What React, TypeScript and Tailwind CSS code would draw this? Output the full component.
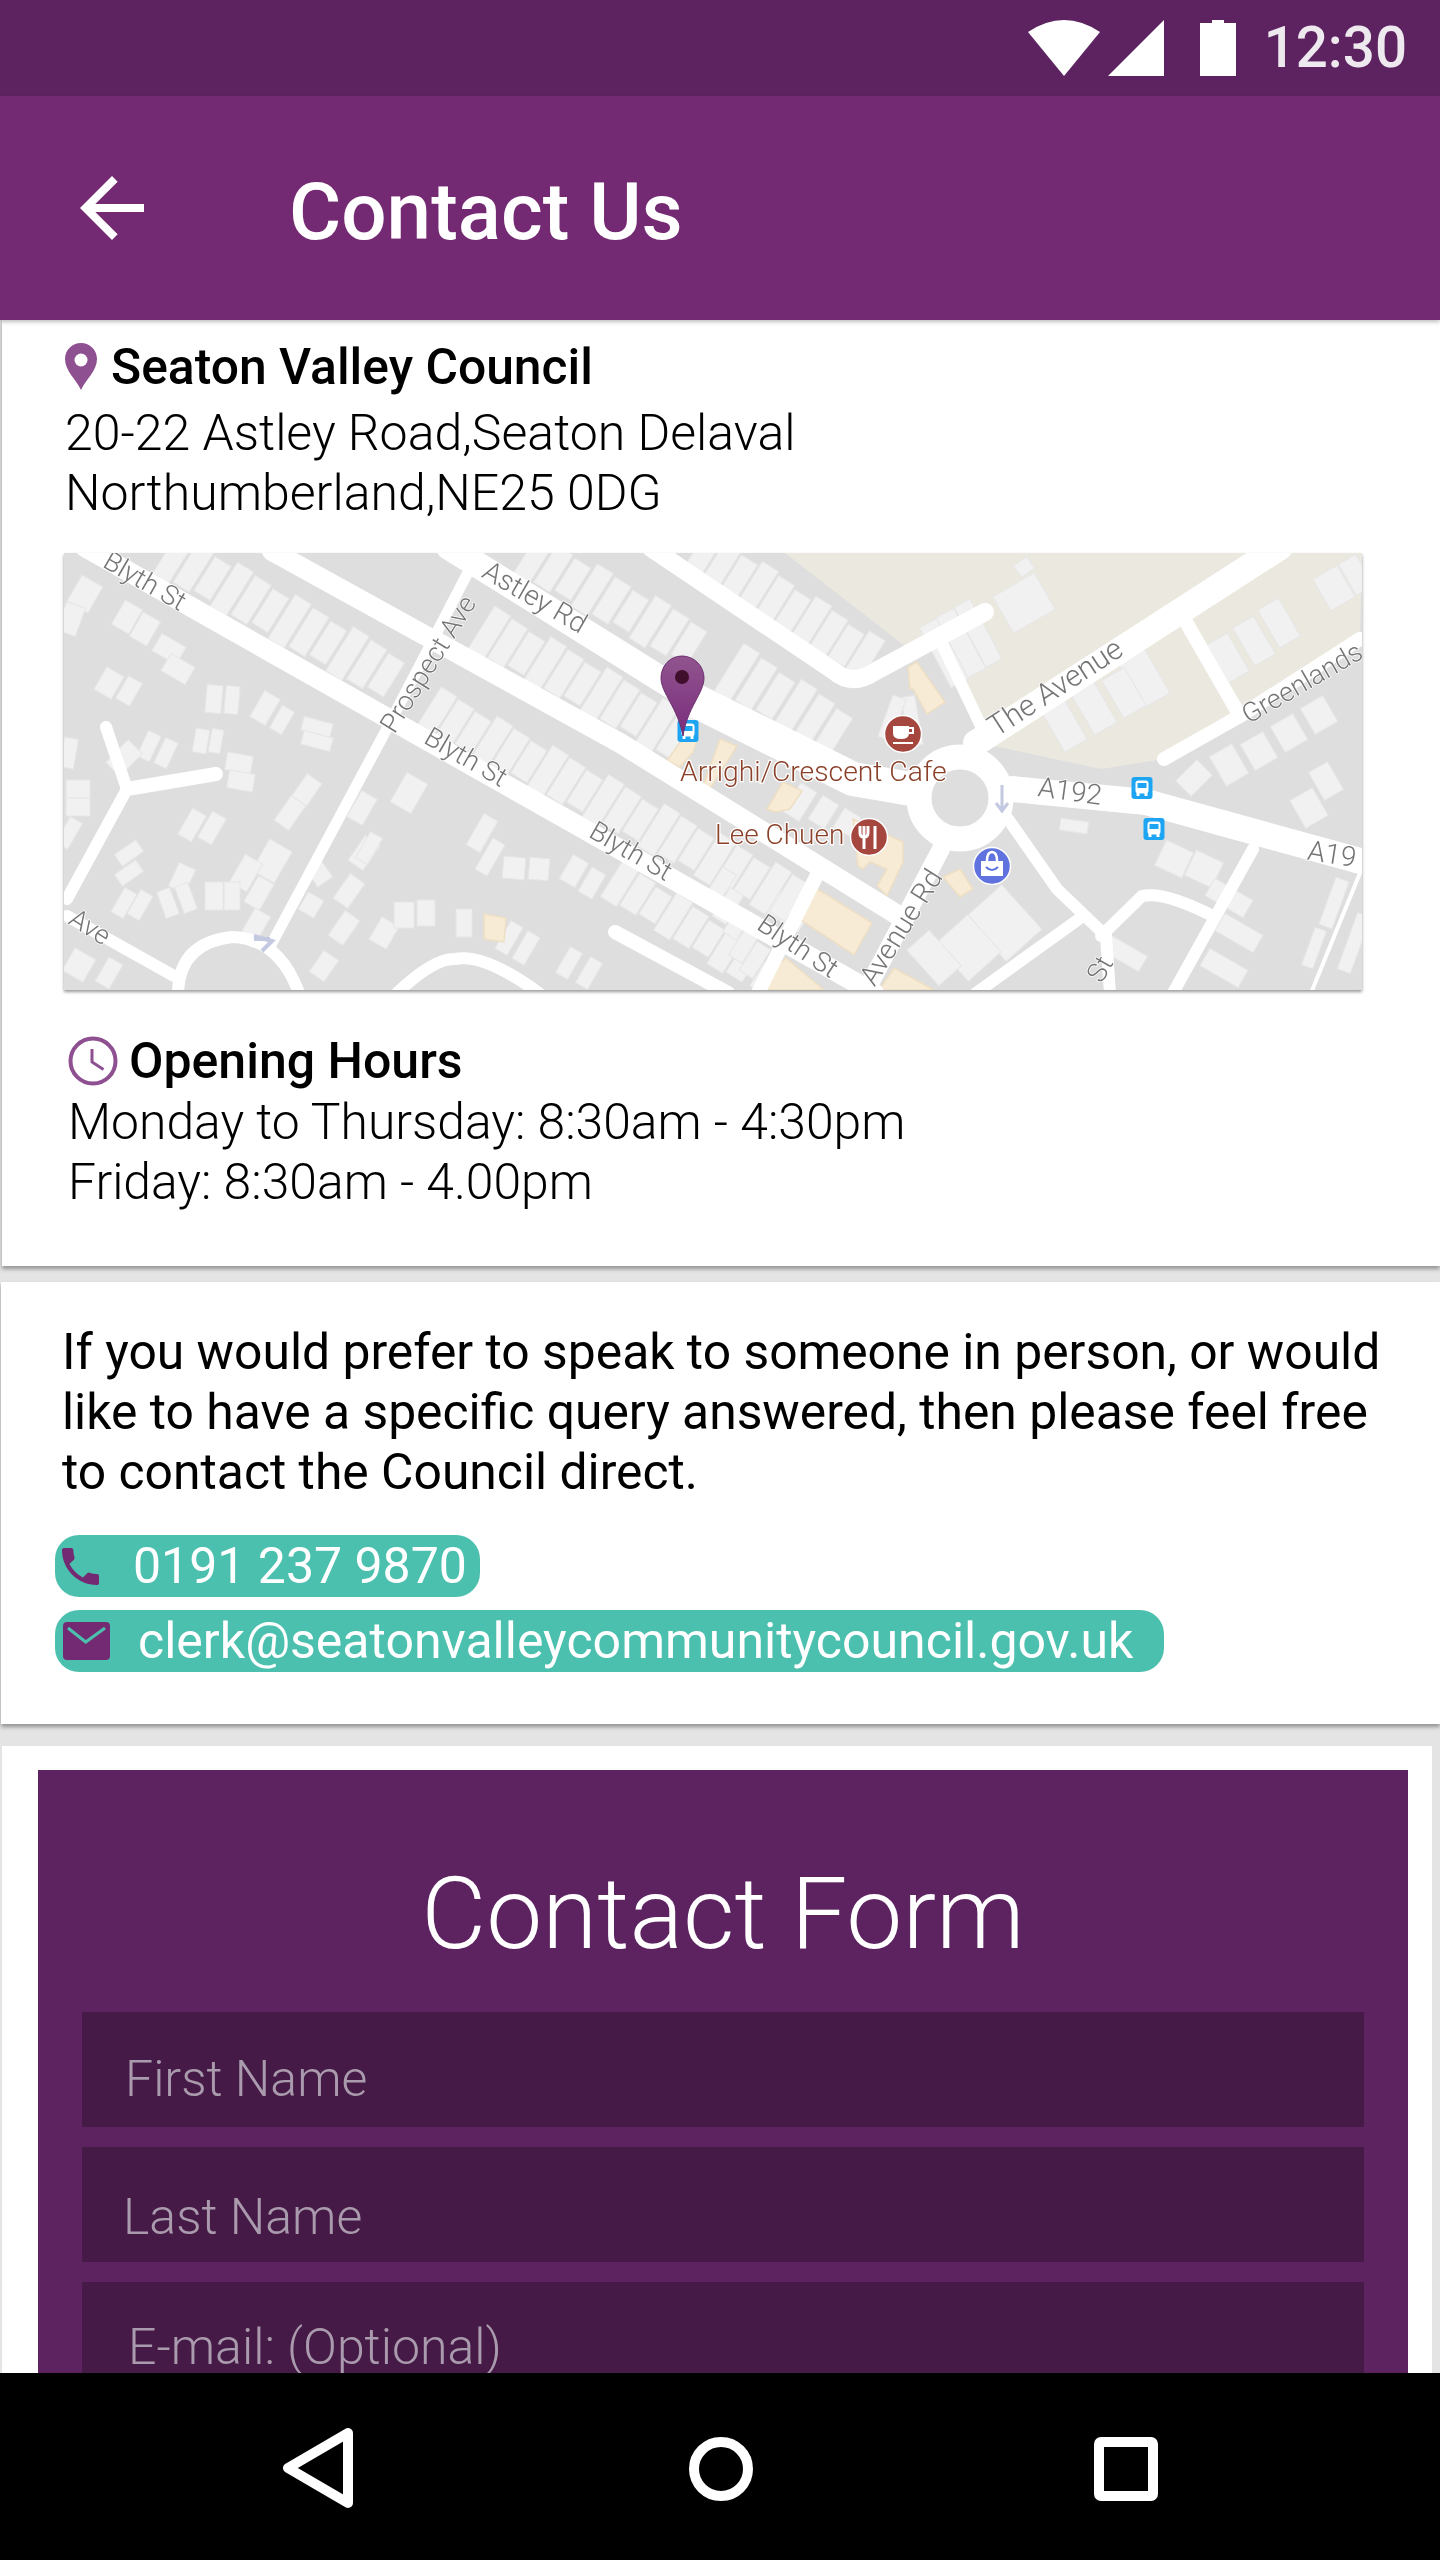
// [x, y, w, h, angle] in map pixels
const houses: number[][] = [
  [21, 41, 24, 30, 30], [7, 66, 20, 30, 20], [63, 64, 20, 28, 30], [81, 76, 20, 28, 30],
  [105, 96, 28, 20, 30], [114, 116, 28, 20, 30], [45, 130, 20, 26, 30], [65, 138, 16, 26, 30],
  [150, 146, 16, 28, 5], [168, 147, 14, 28, 5], [201, 155, 18, 30, 30], [218, 167, 14, 26, 30],
  [253, 174, 30, 14, 15], [253, 188, 30, 14, 15], [137, 188, 14, 24, 10], [152, 188, 12, 24, 10],
  [85, 193, 14, 28, 25], [102, 200, 14, 28, 25], [175, 210, 26, 18, 10], [177, 228, 26, 18, 10],
  [242, 238, 18, 30, 35], [226, 260, 18, 30, 35], [208, 308, 26, 36, 30], [195, 340, 18, 30, 30],
  [190, 375, 18, 36, 30], [60, 205, 32, 20, -45], [128, 272, 16, 30, 30], [148, 275, 16, 30, 30],
  [118, 325, 18, 26, 25], [182, 320, 20, 32, 30], [65, 300, 14, 26, 55], [65, 320, 14, 26, 55],
  [60, 350, 14, 28, 30], [76, 352, 14, 28, 30], [104, 350, 14, 28, -20], [122, 345, 14, 28, -20],
  [150, 343, 18, 28, 0], [168, 343, 16, 28, 0], [14, 236, 24, 18, 0], [14, 254, 24, 18, 0],
  [5, 200, 14, 30, 10], [5, 280, 14, 30, 30], [255, 320, 18, 22, -35], [247, 352, 18, 20, 30],
  [300, 300, 18, 30, 35], [285, 338, 18, 30, 35], [280, 375, 18, 30, 35], [260, 413, 18, 26, 35],
  [298, 255, 18, 30, 30], [305, 295, 14, 30, 30], [345, 240, 24, 34, 30], [418, 280, 16, 36, 30],
  [426, 304, 14, 36, 30], [450, 315, 22, 22, 5], [475, 316, 20, 22, 5], [510, 318, 18, 28, 30],
  [528, 330, 16, 28, 30], [320, 380, 20, 26, 30], [340, 362, 20, 26, 0], [362, 360, 18, 26, 0],
  [400, 370, 16, 28, 0], [445, 385, 14, 32, 30], [462, 395, 14, 32, 30], [505, 410, 14, 30, 30],
  [525, 420, 14, 30, 30], [15, 412, 24, 26, 30], [45, 420, 16, 28, 30],
  // right of the roundabout
  [880, 100, 20, 68, -28], [897, 90, 20, 68, -28], [914, 80, 18, 68, -28], [960, 50, 48, 42, -30],
  [960, 14, 16, 14, -35], [1000, 172, 26, 48, -30], [1030, 155, 26, 48, -30], [1080, 125, 30, 52, -30],
  [1060, 140, 26, 44, -30], [1164, 105, 24, 44, -30], [1190, 88, 24, 44, -30], [1215, 70, 24, 44, -30],
  [1270, 35, 28, 36, -30], [1292, 22, 20, 36, -30], [1130, 225, 30, 22, -45], [1165, 212, 26, 34, -30],
  [1195, 198, 26, 30, -30], [1225, 180, 26, 30, -30], [1255, 162, 26, 30, -30], [1245, 255, 26, 32, -30],
  [1262, 228, 22, 32, -30], [1010, 273, 28, 12, 8], [1110, 306, 30, 28, 25], [1140, 316, 30, 28, 25],
  [940, 370, 48, 60, -42], [904, 395, 44, 50, -42], [870, 405, 30, 48, -42], [720, 355, 50, 26, 33],
  [1060, 400, 44, 18, 30], [1165, 345, 44, 20, 30], [1175, 380, 44, 20, 30], [1160, 415, 44, 20, 30],
  [1290, 390, 14, 60, 20], [1270, 350, 14, 50, 20], [1250, 395, 12, 40, 20], [848, 168, 14, 50, -10],
  [828, 165, 14, 44, 20],
];

// [x0, y0, x1, y1, width, depth, angle] rows of terraced houses
const rows: number[][] = [
  [110, 4, 322, 122, 19, 52, 32], [372, 160, 725, 345, 19, 50, 32], [425, 80, 612, 182, 19, 52, 32],
  [673, 119, 769, 179, 19, 56, 32], [470, 5, 625, 90, 19, 50, 32], [640, 0, 800, 104, 19, 50, 32],
  [556, 330, 680, 408, 19, 44, 32], [655, 335, 700, 425, 16, 40, 32], [736, 249, 783, 269, 19, 34, 32],
];

const roads: [string, number][] = [
  ["M21 -6 L810 440", 20],
  ["M208 -2 L556 190 L840 366", 20],
  ["M385 -6 L640 153", 26],
  ["M630 147 L789 226 L870 240", 34],
  ["M587 -5 L770 118 Q788 134 812 118 L921 59", 18],
  ["M912 190 L1216 -6", 26],
  ["M948 236 L1082 249 L1296 308", 26],
  ["M877 89 L917 173", 12],
  ["M1122 69 L1176 163", 14],
  ["M1100 206 L1176 163 L1296 86", 14],
  ["M944 266 L993 336 L1042 383 L1046 440", 12],
  ["M912 440 L1015 366", 12],
  ["M877 296 L801 440", 18],
  ["M1189 296 L1109 440", 12],
  ["M1037 383 L1078 343 Q1100 338 1149 363", 12],
  ["M1296 320 L1247 440", 4],
  ["M756 316 L694 440", 14],
  ["M63 236 L42 174", 12],
  ["M63 236 L152 221", 14],
  ["M63 236 L3 346", 12],
  ["M412 4 L319 183 L208 390", 11],
  ["M3 363 L110 423", 12],
  ["M114 440 Q115 390 168 384 Q215 385 235 440", 12],
  ["M333 440 Q370 405 391 406 Q420 400 475 440", 12],
  ["M551 379 L664 440", 14],
];

const labels: [string, number, number, number, number][] = [
  ["Blyth St", 81, 28, 30, 27],
  ["Astley Rd", 471, 44, 30, 28],
  ["Prospect Ave", 364, 111, -58, 27],
  ["Blyth St", 402, 204, 30, 27],
  ["Blyth St", 567, 298, 30, 27],
  ["Ave", 26, 374, 32, 27],
  ["Blyth St", 734, 393, 34, 27],
  ["Avenue Rd", 837, 374, -58, 28],
  ["St", 1036, 416, -60, 27],
  ["The Avenue", 991, 134, -33, 30],
  ["Greenlands", 1238, 130, -30, 27],
  ["A192", 1006, 238, 8, 28],
  ["A19", 1268, 301, 9, 28],
];

const beige: string[] = [
  "844,114 853,109 881,149 863,161 849,136 846,136",
  "603,208 616,189 636,179 629,199 616,214",
  "656,186 673,193 644,239 640,230",
  "703,256 719,229 738,238 726,256 711,259",
  "789,266 839,289 839,309 823,343 813,333 823,316 806,309 799,316 794,313",
  "879,324 896,316 909,336 896,344",
  "420,361 442,365 440,389 420,386",
  "735,366 752,335 808,370 790,402",
  "700,424 722,405 760,437 700,437",
  "815,437 830,415 870,437",
];

function BusStop({ x, y }: { x: number; y: number }) {
  return (
    <g transform={`translate(${x - 10.5} ${y - 11})`}>
      <rect width="21" height="22" rx="3" fill="#1da5f4" />
      <rect x="4" y="3.5" width="13" height="13" rx="3" fill="#fff" />
      <rect x="6" y="6" width="9" height="5" fill="#1da5f4" />
      <rect x="5" y="16" width="3" height="3" fill="#fff" />
      <rect x="13" y="16" width="3" height="3" fill="#fff" />
    </g>
  );
}

function MapPicture() {
  const stripes: number[][] = [];
  rows.forEach(([x0, y0, x1, y1, w, d, a]) => {
    const n = Math.round(Math.hypot(x1 - x0, y1 - y0) / (w + 2.5));
    for (let i = 0; i <= n; i++) {
      const x = x0 + ((x1 - x0) * i) / n;
      const y = y0 + ((y1 - y0) * i) / n;
      stripes.push([x, y, w, d - (i % 3) * 6, a]);
    }
  });
  return (
    <svg viewBox="0 0 1298 437" className="block w-full h-full blur-[0.5px]">
      <defs>
        <linearGradient id="pin" x1="0" y1="0" x2="0" y2="1">
          <stop offset="0" stopColor="#91558f" />
          <stop offset="1" stopColor="#7a2c7c" />
        </linearGradient>
      </defs>
      <rect width="1298" height="437" fill="#dedede" />
      <polygon points="721,0 841,93 880,85 921,173 930,193 1037,216 1100,206 1296,83 1298,0" fill="#ebe9df" />
      {[...houses, ...stripes].map(([x, y, w, h, a], i) => (
        <rect
          key={i}
          x={x - w / 2}
          y={y - h / 2}
          width={w}
          height={h}
          transform={`rotate(${a} ${x} ${y})`}
          fill="#f1f1f1"
          stroke="#e6e6e6"
        />
      ))}
      {beige.map((p, i) => (
        <polygon key={i} points={p} fill="#f7ebd6" stroke="#eedfc4" strokeWidth="1.5" />
      ))}
      {roads.map(([d, w], i) => (
        <path key={i} d={d} fill="none" stroke="#fff" strokeWidth={w} strokeLinecap="round" strokeLinejoin="round" />
      ))}
      <circle cx="896" cy="245" r="41" fill="#dedede" stroke="#fff" strokeWidth="25" />
      <path d="M938 232 V258 M932 250 L938 258 L944 250" fill="none" stroke="#c3c9e0" strokeWidth="3" />
      <path d="M190 383 L208 388 L198 398 M190 386 H206" fill="none" stroke="#c3c9e0" strokeWidth="4" />
      {labels.map(([t, x, y, a, size], i) => (
        <text
          key={i}
          x={x}
          y={y}
          transform={`rotate(${a} ${x} ${y})`}
          textAnchor="middle"
          dominantBaseline="central"
          fontSize={size}
          fill="#757575"
          stroke="#fff"
          strokeWidth="1.5"
          paintOrder="stroke"
          className="font-[Roboto,sans-serif]"
        >
          {t}
        </text>
      ))}
      <text x="616" y="228" fontSize="28.3" fill="#8a4029" stroke="#fff" strokeWidth="2.5" paintOrder="stroke" className="font-[Roboto,sans-serif]">
        Arrighi/Crescent Cafe
      </text>
      <text x="651" y="291" fontSize="28" fill="#8a4029" stroke="#fff" strokeWidth="2.5" paintOrder="stroke" className="font-[Roboto,sans-serif]">
        Lee Chuen
      </text>
      <BusStop x={624} y={178} />
      <BusStop x={1078} y={235} />
      <BusStop x={1090} y={276} />
      <circle cx="839" cy="181" r="18.5" fill="#a5473f" stroke="#fff" strokeWidth="1.5" />
      <path d="M829 173 H845 V180 Q845 186 837 186 Q829 186 829 180 Z" fill="#fff" />
      <path d="M845 175 H849 V180 H845 M829 190 H849" fill="none" stroke="#fff" strokeWidth="2" />
      <circle cx="805" cy="284" r="18.5" fill="#a5473f" stroke="#fff" strokeWidth="1.5" />
      <path d="M800 273 V296 M796 273 V280 Q796 284 800 284 Q804 284 804 280 V273 M811 273 V296" fill="none" stroke="#fff" strokeWidth="3" />
      <circle cx="928" cy="313" r="18.5" fill="#5f72dd" stroke="#fff" strokeWidth="1.5" />
      <path d="M917 308 H939 V323 H917 Z" fill="#fff" />
      <path d="M923 308 Q923 299 928 299 Q933 299 933 308" fill="none" stroke="#fff" strokeWidth="2.5" />
      <path d="M922 314 Q928 320 934 314" fill="none" stroke="#5f72dd" strokeWidth="2" />
      <path d="M618 103 C606 103 597 113 597 125 C597 140 614 155 619 183 C623 155 640 140 640 125 C640 113 630 103 618 103 Z" fill="url(#pin)" stroke="#6c2f6e" />
      <circle cx="618" cy="124" r="7" fill="#3f0f2c" />
    </svg>
  );
}

function Field({ label, indent, pad }: { label: string; indent: string; pad: string }) {
  return (
    <div className={`h-[115px] bg-[#461a46] flex items-center text-[50px] font-light text-[#a99bad] ${indent} ${pad}`}>
      {label}
    </div>
  );
}

export default function App() {
  return (
    <div className="w-[1440px] h-[2560px] flex flex-col overflow-hidden bg-[#e4e4e4] font-[Roboto,sans-serif] text-black">
      {/* status bar */}
      <div className="h-[96px] shrink-0 bg-[#5c2360] flex items-start justify-end pr-[33px]">
        <svg width="72" height="56" viewBox="0 0 72 56" className="mt-[20px]">
          <path d="M0 12 Q36 -12 72 12 L36 56 Z" fill="#fff" />
        </svg>
        <svg width="56" height="56" viewBox="0 0 56 56" className="mt-[20px] ml-[8px]">
          <path d="M56 0 V56 H0 Z" fill="#fff" />
        </svg>
        <svg width="36" height="56" viewBox="0 0 36 56" className="mt-[20px] ml-[36px]">
          <path d="M12 0 H24 V3 H36 V56 H0 V3 H12 Z" fill="#fff" />
        </svg>
        <span className="ml-[28px] mt-[19px] text-[56.5px] leading-[58px] font-medium text-[#eee8ef]">12:30</span>
      </div>

      {/* toolbar */}
      <div className="h-[224px] shrink-0 bg-[#742a72] flex items-center pl-[64px] text-white relative shadow-[0_2px_4px_rgba(0,0,0,0.25)]">
        <svg width="96" height="96" viewBox="0 0 24 24" className="shrink-0">
          <path d="M20 11H7.83l5.59-5.59L12 4l-8 8 8 8 1.41-1.41L7.83 13H20v-2z" fill="#fff" />
        </svg>
        <h1 className="ml-[129px] pt-[7px] text-[80px] font-medium">Contact Us</h1>
      </div>

      <main className="flex-1 min-h-0 overflow-hidden">
        {/* address + map + hours */}
        <section className="ml-[2px] bg-white shadow-[0_3px_4px_rgba(0,0,0,0.35)] pt-[17px] pb-[54px] text-[50px] leading-[60px] font-light">
          <div className="flex items-center ml-[63px]">
            <svg width="32" height="47" viewBox="0 0 32 47" className="shrink-0 -mt-[2px]">
              <path d="M16 0 C7 0 0 7 0 16 C0 28 11 36 16 47 C21 36 32 28 32 16 C32 7 25 0 16 0 Z" fill="#8e5090" />
              <circle cx="16" cy="17" r="6.5" fill="#fff" />
            </svg>
            <h2 className="ml-[14px] font-medium text-[49.8px]">Seaton Valley Council</h2>
          </div>
          <p className="ml-[63px] mt-[6px]">
            20-22 Astley Road,Seaton Delaval
            <br />
            Northumberland,NE25 0DG
          </p>
          <div className="ml-[62px] mt-[30px] w-[1298px] h-[437px] shadow-[0_2px_3px_rgba(0,0,0,0.4)]">
            <MapPicture />
          </div>
          <div className="flex items-center ml-[66px] mt-[41px]">
            <svg width="50" height="50" viewBox="0 0 50 50" className="shrink-0">
              <circle cx="25" cy="25" r="22.5" fill="none" stroke="#8e5090" strokeWidth="4" />
              <path d="M24 13 V26 L35.5 33.5" fill="none" stroke="#8e5090" strokeWidth="3" />
            </svg>
            <h2 className="ml-[11px] font-medium">Opening Hours</h2>
          </div>
          <p className="ml-[66px] mt-[1px] text-[49.8px]">
            Monday to Thursday: 8:30am - 4:30pm
            <br />
            Friday: 8:30am - 4.00pm
          </p>
        </section>

        {/* contact details */}
        <section className="mt-[16px] ml-[1px] bg-white shadow-[0_3px_4px_rgba(0,0,0,0.35)] pt-[40px] pb-[52px] pl-[61px] text-[50px] leading-[60px]">
          <p className="text-[49.8px]">
            If you would prefer to speak to someone in person, or would
            <br />
            like to have a specific query answered, then please feel free
            <br />
            to contact the Council direct.
          </p>
          <div className="mt-[33px] -ml-[7px] flex flex-col items-start gap-[13px] text-white">
            <a className="w-[425px] h-[62px] rounded-[24px] bg-[#4cc0ae] flex items-center pl-[7px]">
              <svg width="37" height="37" viewBox="3 3 18 18" className="shrink-0">
                <path
                  d="M6.6 10.8c1.4 2.8 3.8 5.1 6.6 6.6l2.2-2.2c.3-.3.7-.4 1-.2 1.1.4 2.3.6 3.6.6.6 0 1 .4 1 1V20c0 .6-.4 1-1 1C10.6 21 3 13.4 3 4c0-.6.4-1 1-1h3.5c.6 0 1 .4 1 1 0 1.3.2 2.5.6 3.6.1.3 0 .7-.2 1l-2.3 2.2z"
                  fill="#742a72"
                />
              </svg>
              <span className="ml-[34px]">0191 237 9870</span>
            </a>
            <a className="w-[1109px] h-[62px] rounded-[24px] bg-[#4cc0ae] flex items-center pl-[8px]">
              <svg width="47" height="38" viewBox="0 0 47 38" className="shrink-0">
                <rect width="47" height="38" rx="4" fill="#742a72" />
                <path d="M5 6 L22.7 20 L42 6" fill="none" stroke="#4cc0ae" strokeWidth="3" />
              </svg>
              <span className="ml-[28px]">clerk@seatonvalleycommunitycouncil.gov.uk</span>
            </a>
          </div>
        </section>

        {/* form */}
        <section className="mt-[22px] ml-[2px] w-[1430px] bg-white pt-[24px] pl-[36px]">
          <div className="w-[1370px] bg-[#5c2360] px-[44px] pt-[90px] pb-[40px]">
            <h2 className="text-center text-[100px] leading-[108px] font-light text-white mb-[44px]">Contact Form</h2>
            <div className="flex flex-col gap-[20px]">
              <Field label="First Name" indent="pl-[43px]" pad="pt-[19px]" />
              <Field label="Last Name" indent="pl-[41px]" pad="pt-[26px]" />
              <Field label="E-mail: (Optional)" indent="pl-[46px]" pad="pt-[16px]" />
            </div>
          </div>
        </section>
      </main>

      {/* nav bar */}
      <div className="h-[187px] shrink-0 bg-black relative z-10 flex items-start">
        <svg width="70" height="80" viewBox="0 0 70 80" className="ml-[283px] mt-[55px]">
          <path d="M65 5 V75 L5 40 Z" fill="none" stroke="#fff" strokeWidth="10" strokeLinejoin="round" />
        </svg>
        <svg width="64" height="64" viewBox="0 0 64 64" className="ml-[336px] mt-[64px]">
          <circle cx="32" cy="32" r="27" fill="none" stroke="#fff" strokeWidth="10" />
        </svg>
        <svg width="64" height="64" viewBox="0 0 64 64" className="ml-[341px] mt-[64px]">
          <rect x="5" y="5" width="54" height="54" rx="2" fill="none" stroke="#fff" strokeWidth="10" />
        </svg>
      </div>
    </div>
  );
}
